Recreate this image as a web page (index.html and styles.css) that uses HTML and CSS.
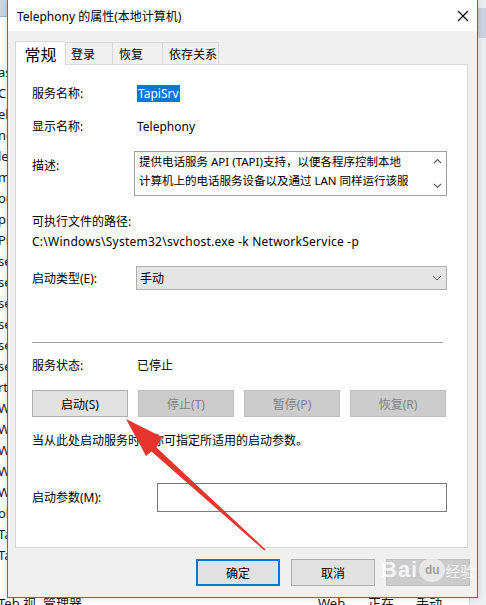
FILE: index.html
```html
<!DOCTYPE html>
<html lang="zh-CN">
<head>
<meta charset="utf-8">
<title>Telephony 的属性(本地计算机)</title>
<link rel="stylesheet" href="styles.css">
</head>
<body>
<div class="desk">
  <div class="desk-list">
    <div class="desk-head"></div>
    <div class="desk-rows">
      <div class="bgrow">as</div>
      <div class="bgrow">CP</div>
      <div class="bgrow">el</div>
      <div class="bgrow">ne</div>
      <div class="bgrow">le</div>
      <div class="bgrow">m</div>
      <div class="bgrow">ou</div>
      <div class="bgrow">p</div>
      <div class="bgrow">Pi</div>
      <div class="bgrow">se</div>
      <div class="bgrow">se</div>
      <div class="bgrow">se</div>
      <div class="bgrow">se</div>
      <div class="bgrow">se</div>
      <div class="bgrow">se</div>
      <div class="bgrow">rt</div>
      <div class="bgrow">W</div>
      <div class="bgrow">W</div>
      <div class="bgrow">W</div>
      <div class="bgrow">W</div>
      <div class="bgrow">W</div>
      <div class="bgrow">ol</div>
      <div class="bgrow">Ta</div>
      <div class="bgrow">Ta</div>
      <div class="bgrow bglast"><span class="c1">Teb 视, 管理器</span><span class="c2">Web...</span><span class="c3">正在...</span><span class="c4">手动</span></div>
    </div>
  </div>
  <div class="desk-scroll"><div class="desk-scroll-top"></div></div>
</div>

<div class="dialog">
  <div class="titlebar">
    <span class="title">Telephony 的属性(本地计算机)</span>
    <svg class="close" width="12" height="12" viewBox="0 0 12 12"><path d="M1 1L11 11M11 1L1 11" stroke="#000" stroke-width="1.1" fill="none"/></svg>
  </div>
  <div class="dbody">
    <div class="tabs">
      <div class="tab tab-active">常规</div>
      <div class="tab tab-w46">登录</div>
      <div class="tab tab-w50">恢复</div>
      <div class="tab tab-w56">依存关系</div>
    </div>
    <div class="panel">
      <div class="row r1">
        <span class="lbl">服务名称:</span>
        <span class="val"><span class="sel">TapiSrv</span></span>
      </div>
      <div class="row r2">
        <span class="lbl">显示名称:</span>
        <span class="val">Telephony</span>
      </div>
      <div class="row r3">
        <span class="lbl lbl-desc">描述:</span>
        <div class="desc">
          <div class="desc-text">提供电话服务 API (TAPI)支持，以便各程序控制本地<br>计算机上的电话服务设备以及通过 LAN 同样运行该服</div>
          <div class="desc-scroll">
            <svg width="9" height="6" viewBox="0 0 9 6"><path d="M1 5L4.5 1.5L8 5" stroke="#606060" stroke-width="1.2" fill="none"/></svg>
            <svg width="9" height="6" viewBox="0 0 9 6"><path d="M1 1L4.5 4.5L8 1" stroke="#606060" stroke-width="1.2" fill="none"/></svg>
          </div>
        </div>
      </div>
      <div class="path-lbl">可执行文件的路径:</div>
      <div class="path">C:\Windows\System32\svchost.exe -k NetworkService -p</div>
      <div class="row r4">
        <span class="lbl">启动类型(E):</span>
        <div class="combo">
          <span>手动</span>
          <svg width="10" height="6" viewBox="0 0 10 6"><path d="M1 1L5 5L9 1" stroke="#505050" stroke-width="1" fill="none"/></svg>
        </div>
      </div>
      <div class="sep"></div>
      <div class="row r5">
        <span class="lbl">服务状态:</span>
        <span class="val">已停止</span>
      </div>
      <div class="svc-btns">
        <div class="btn">启动(S)</div>
        <div class="btn btn-dis">停止(T)</div>
        <div class="btn btn-dis">暂停(P)</div>
        <div class="btn btn-dis">恢复(R)</div>
      </div>
      <div class="hint">当从此处启动服务时，你可指定所适用的启动参数。</div>
      <div class="row r6">
        <span class="lbl lbl-param">启动参数(M):</span>
        <div class="input"></div>
      </div>
    </div>
    <div class="actions">
      <div class="btn abtn btn-default">确定</div>
      <div class="btn abtn">取消</div>
      <div class="btn abtn btn-dis btn-apply">应用(A)</div>
    </div>
  </div>
</div>

<svg class="arrow" width="486" height="605" viewBox="0 0 486 605">
  <polygon points="126,419 162,437 156.5,447.5 265.6,549.4 264.4,550.6 151.5,451.5 146,456" fill="#e5352c"/>
</svg>

<div class="watermark">
  <span class="wm-bai">Bai</span>
  <span class="wm-paw"><span class="wm-du">du</span></span>
  <span class="wm-jy">经验</span>
</div>
</body>
</html>
```

FILE: styles.css
```css
* { box-sizing: border-box; }

body {
  margin: 0;
  width: 486px;
  height: 605px;
  overflow: hidden;
  position: relative;
  background: #ffffff;
  font-family: "Noto Sans", "Noto Sans CJK SC", sans-serif;
  font-size: 12px;
  color: #000;
}

/* background window */
.desk {
  display: flex;
  width: 486px;
  height: 605px;
}
.desk-list {
  flex: 1;
  display: flex;
  flex-direction: column;
  overflow: hidden;
}
.desk-head {
  height: 17px;
  flex: none;
  background: #c9d5e2;
  border-bottom: 1px solid #9fb3c8;
}
.desk-rows {
  flex: 1;
  display: flex;
  flex-direction: column;
  padding-top: 46px;
}
.bgrow {
  height: 21px;
  line-height: 19px;
  margin-left: -2px;
  white-space: nowrap;
  color: #1a1a1a;
  font-size: 13px;
  flex: none;
}
.bglast {
  margin-top: auto;
  height: 16px;
  line-height: 16px;
  margin-bottom: -6px;
}
.bglast .c1 { display: inline-block; width: 320px; }
.bglast .c2 { display: inline-block; width: 50px; }
.bglast .c3 { display: inline-block; width: 48px; }
.desk-scroll {
  width: 17px;
  background: #eceef1;
  border-left: 1px solid #d0d6de;
}
.desk-scroll-top {
  height: 30px;
  margin-top: 8px;
  background: #c8d3df;
}

/* dialog window */
.dialog {
  position: absolute;
  left: 7px;
  top: -1px;
  width: 471px;
  height: 599px;
  border: 1px solid #3a78ad;
  background: #f0f0f0;
  display: flex;
  flex-direction: column;
  box-shadow: 0 0 6px rgba(0, 0, 0, 0.15);
}
.titlebar {
  height: 31px;
  background: #ffffff;
  display: flex;
  align-items: center;
  padding: 0 8px 0 9px;
  flex: none;
}
.title {
  flex: 1;
  font-size: 12px;
  padding-top: 1px;
}

.dbody {
  flex: 1;
  padding: 10px 6px 0 7px;
  display: flex;
  flex-direction: column;
}

.tabs {
  display: flex;
  height: 23px;
  align-items: flex-end;
}
.tab {
  height: 22px;
  border: 1px solid #d9d9d9;
  border-bottom: none;
  margin-left: -1px;
  background: #f0f0f0;
  display: flex;
  align-items: center;
  justify-content: flex-start;
  padding: 1px 0 0 6px;
  font-size: 12px;
}
.tab-active {
  margin-left: 0;
  width: 51px;
  height: 24px;
  margin-bottom: -1px;
  background: #ffffff;
  position: relative;
  z-index: 1;
  font-size: 16px;
  justify-content: center;
  padding: 0;
}
.tab-w46 { width: 47px; margin-left: 0; border-left: none; padding-left: 5px; }
.tab-w50 { width: 51px; }
.tab-w56 { width: 57px; }

.panel {
  height: 484px;
  width: 453px;
  background: #ffffff;
  border: 1px solid #d9d9d9;
  padding: 20px 20px 0 16px;
  display: flex;
  flex-direction: column;
}

.row {
  display: flex;
  align-items: center;
}
.lbl {
  width: 105px;
  flex: none;
  line-height: 17px;
}
.val {
  line-height: 17px;
}
.sel {
  background: #0078d7;
  color: #ffffff;
  padding: 0 1px;
  display: inline-block;
  line-height: 17px;
}
.r2 { margin-top: 16px; }
.r3 {
  margin-top: 16px;
  align-items: flex-start;
}
.lbl-desc { padding-top: 6px; }
.desc {
  margin-left: -3px;
  width: 313px;
  height: 45px;
  border: 1px solid #a0a0a0;
  display: flex;
  overflow: hidden;
}
.desc-text {
  flex: 1;
  padding: 0 0 0 4px;
  font-size: 11.5px;
  line-height: 19px;
  white-space: nowrap;
  overflow: hidden;
}
.desc-scroll {
  width: 17px;
  display: flex;
  flex-direction: column;
  justify-content: space-between;
  align-items: center;
  padding: 6px 0 6px 0;
}

.path-lbl {
  margin-top: 17px;
  line-height: 17px;
}
.path {
  margin-top: 3px;
  line-height: 17px;
  white-space: nowrap;
  letter-spacing: 0.25px;
}

.r4 { margin-top: 16px; }
.combo {
  margin-left: -1px;
  width: 312px;
  height: 24px;
  background: #e5e5e5;
  border: 1px solid #adadad;
  display: flex;
  align-items: center;
  justify-content: space-between;
  padding: 0 4px 0 3px;
}

.sep {
  margin-top: 52px;
  height: 1px;
  background: #a0a0a0;
  margin-right: 4px;
}

.r5 { margin-top: 14px; }

.svc-btns {
  margin-top: 16px;
  display: flex;
  gap: 10px;
}
.btn {
  height: 27px;
  background: #e1e1e1;
  border: 1px solid #adadad;
  display: flex;
  align-items: center;
  justify-content: center;
  font-size: 12px;
}
.svc-btns .btn { width: 96px; }
.btn-dis {
  background: #cccccc;
  border-color: #bfbfbf;
  color: #838383;
}

.hint {
  margin-top: 15px;
  line-height: 17px;
  white-space: nowrap;
}

.r6 { margin-top: 34px; }
.lbl-param { width: 125px; }
.input {
  width: 290px;
  height: 29px;
  border: 1px solid #7a7a7a;
  background: #fff;
}

.actions {
  margin-top: 11px;
  display: flex;
  justify-content: flex-end;
  gap: 11px;
  padding-right: 1px;
}
.abtn { width: 84px; }
.btn-default {
  border: 2px solid #0078d7;
}
.btn-apply {
  color: #c4c4c4;
}

/* overlays */
.arrow {
  position: absolute;
  left: 0;
  top: 0;
  pointer-events: none;
}
.watermark {
  position: absolute;
  left: 381px;
  top: 557px;
  display: flex;
  align-items: center;
  pointer-events: none;
}
.wm-bai {
  font-family: "Liberation Sans", sans-serif;
  font-weight: bold;
  font-size: 22px;
  letter-spacing: 1px;
  color: rgba(255, 255, 255, 0.8);
}
.wm-paw {
  width: 26px;
  height: 24px;
  border-radius: 50%;
  background: rgba(255, 255, 255, 0.55);
  display: flex;
  align-items: center;
  justify-content: center;
  margin-left: 1px;
}
.wm-du {
  font-family: "Liberation Sans", sans-serif;
  font-weight: bold;
  font-size: 12px;
  color: rgba(110, 110, 110, 0.6);
}
.wm-jy {
  font-size: 15px;
  font-family: "Noto Sans CJK SC", sans-serif;
  color: rgba(255, 255, 255, 0.75);
}
```
